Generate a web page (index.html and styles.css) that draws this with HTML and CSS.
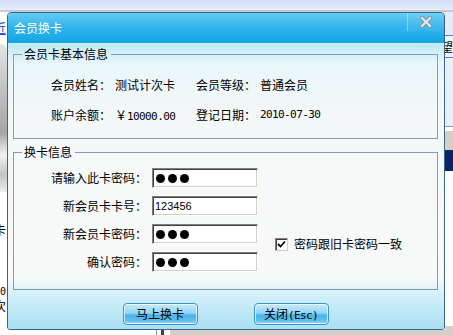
FILE: index.html
```html
<!DOCTYPE html>
<html lang="zh-CN">
  <head>
    <meta charset="UTF-8" />
    <title>会员换卡</title>
    <link rel="stylesheet" href="styles.css">
  </head>
  <body>
    <div class="screen">
      <div class="topbar"></div>
      <div class="desk">
        <div class="side-left">
          <div class="frag link">近</div>
          <div class="logo"></div>
          <div class="frag frag-ka">卡</div>
          <div class="frag frag-num">00</div>
          <div class="frag frag-ci">次</div>
        </div>

        <div class="middle">
          <div class="dialog">
            <div class="titlebar">
              <span class="title">会员换卡</span>
              <span class="close">
                <svg width="12" height="12" viewBox="0 0 12 12">
                  <path d="M2 2 L10 10 M10 2 L2 10" stroke="#7890a4" stroke-width="4.2" stroke-linecap="square" fill="none"/>
                  <path d="M2 2 L10 10 M10 2 L2 10" stroke="#e4e9ee" stroke-width="2.2" stroke-linecap="square" fill="none"/>
                </svg>
              </span>
            </div>

            <div class="body">
              <fieldset class="group">
                <legend>会员卡基本信息</legend>
                <div class="info-grid">
                  <span>会员姓名：</span>
                  <span>测试计次卡</span>
                  <span>会员等级：</span>
                  <span>普通会员</span>
                  <span>账户余额：</span>
                  <span>￥<span class="num">10000.00</span></span>
                  <span>登记日期：</span>
                  <span class="num">2010-07-30</span>
                </div>
              </fieldset>

              <fieldset class="group change">
                <legend>换卡信息</legend>
                <div class="form-grid">
                  <label>请输入此卡密码：</label>
                  <div class="field"><i class="dot"></i><i class="dot"></i><i class="dot"></i></div>

                  <label>新会员卡卡号：</label>
                  <div class="field field-text">123456</div>

                  <label>新会员卡密码：</label>
                  <div class="field"><i class="dot"></i><i class="dot"></i><i class="dot"></i></div>

                  <label>确认密码：</label>
                  <div class="field"><i class="dot"></i><i class="dot"></i><i class="dot"></i></div>

                  <div class="check">
                    <span class="box">
                      <svg width="9" height="9" viewBox="0 0 9 9">
                        <path d="M1 4 L3.5 6.5 L8 1.5" stroke="#000" stroke-width="1.8" fill="none"/>
                      </svg>
                    </span>
                    <span>密码跟旧卡密码一致</span>
                  </div>
                </div>
              </fieldset>

              <div class="buttons">
                <button class="btn">马上换卡</button>
                <button class="btn">关闭<span class="num">(Esc)</span></button>
              </div>
            </div>
          </div>
          <div class="under">
            <span class="under-white"></span>
            <span class="under-mark"></span>
            <span class="under-grey"></span>
          </div>
        </div>

        <div class="side-right">
          <div class="r-pale"></div>
          <div class="r-menu">望</div>
          <div class="r-light"></div>
          <div class="r-grey"></div>
          <div class="r-navy"></div>
          <div class="r-white"></div>
          <div class="r-bottom"></div>
        </div>
      </div>
    </div>
  </body>
</html>
```

FILE: styles.css
```css
* {
  box-sizing: border-box;
}
body {
  margin: 0;
}
.screen {
  width: 453px;
  height: 335px;
  overflow: hidden;
  background: #fff;
  font-family: "Noto Sans CJK SC", sans-serif;
  font-size: 12px;
  color: #000;
}
.topbar {
  height: 12px;
  background: linear-gradient(#d2def5, #e6edfb);
  border-bottom: 2px solid #c4cad2;
}
.desk {
  display: flex;
  height: 323px;
}

/* clipped bits of the main window behind the dialog */
.side-left {
  width: 7px;
  overflow: hidden;
  background: #fff;
}
.frag {
  margin-left: -6px;
  line-height: 12px;
  white-space: nowrap;
}
.link {
  margin-top: 10px;
  color: #1a3cc8;
  text-decoration: underline;
}
.logo {
  margin-top: 10px;
  height: 148px;
  background: linear-gradient(#e4e4e4, #b8b8b8 40%, #a6a6a6 60%, #f2f2f2 75%, #c4c4c4 88%, #ececec);
  border-top-right-radius: 6px;
}
.frag-ka {
  margin-top: 32px;
}
.frag-num {
  margin-top: 50px;
  font-family: "DejaVu Sans Mono", monospace;
  font-size: 10px;
}
.frag-ci {
  margin-top: 2px;
}

.middle {
  width: 438px;
  display: flex;
  flex-direction: column;
}
.dialog {
  height: 318px;
  border: 1px solid #3a6686;
  border-radius: 4px 4px 3px 3px;
  display: flex;
  flex-direction: column;
  overflow: hidden;
}
.titlebar {
  height: 30px;
  flex: none;
  display: flex;
  justify-content: space-between;
  background: linear-gradient(#66ccf3, #34b5ec 45%, #12a5e4);
}
.title {
  color: #fff;
  padding: 8px 0 0 6px;
  line-height: 14px;
}
.close {
  width: 36px;
  height: 18px;
  margin-right: 1px;
  border-left: 1px solid rgba(255, 255, 255, 0.35);
  background: rgba(255, 255, 255, 0.06);
  display: flex;
  align-items: center;
  justify-content: center;
}
.body {
  flex: 1;
  border-top: 1px solid #d6f3fc;
  padding: 3px 6px 0 5px;
  background: linear-gradient(#bfe9f8, #e9f7fa 7%, #f4f8f8 25%, #f8faf9 82%, #d4f0f9 88%, #a9dff4);
}
.group {
  margin: 0;
  min-width: 0;
  border: 1px solid #7f9db9;
  padding: 8px 8px 9px;
}
.group legend {
  padding: 0 3px 0 2px;
  line-height: 14px;
}
.info-grid {
  display: grid;
  grid-template-columns: 64px 81px 64px auto;
  grid-auto-rows: 30px;
  align-items: center;
  margin-left: 29px;
}
.num {
  font-family: "DejaVu Sans Mono", monospace;
  font-size: 11px;
  letter-spacing: -0.6px;
}

.change {
  margin-top: 6px;
  padding-top: 9px;
  padding-bottom: 17px;
}
.form-grid {
  display: grid;
  grid-template-columns: 125px 106px auto;
  grid-auto-rows: 20px;
  column-gap: 5px;
  row-gap: 8px;
}
.form-grid label {
  grid-column: 1;
  text-align: right;
  line-height: 20px;
}
.field {
  grid-column: 2;
  display: flex;
  align-items: center;
  gap: 3px;
  padding-left: 3px;
  background: #fff;
  border: 1px solid;
  border-color: #808080 #fff #fff #808080;
  box-shadow: inset 1px 1px #404040, inset -1px -1px #d4d0c8;
}
.dot {
  width: 9px;
  height: 9px;
  border-radius: 50%;
  background: #000;
}
.field-text {
  padding-left: 2px;
  font-family: "Liberation Sans", sans-serif;
  font-size: 11px;
}
.check {
  grid-column: 3;
  grid-row: 3 / span 2;
  align-self: start;
  margin: 13px 0 0 12px;
  display: flex;
  align-items: center;
  gap: 6px;
  line-height: 14px;
}
.box {
  width: 13px;
  height: 13px;
  background: #fff;
  border: 1px solid;
  border-color: #808080 #d4d0c8 #d4d0c8 #808080;
  box-shadow: inset 1px 1px #404040;
  display: flex;
  align-items: center;
  justify-content: center;
}

.buttons {
  display: flex;
  justify-content: center;
  gap: 56px;
  margin-top: 13px;
}
.btn {
  width: 75px;
  height: 22px;
  padding: 0;
  border: 1px solid #3f93cf;
  border-radius: 4px;
  box-shadow: inset 0 0 0 1px rgba(255, 255, 255, 0.7);
  background: linear-gradient(#c4ebfc, #92d5f6 45%, #4ab3ea 56%, #5fbff0 84%, #a6e0f8);
  font: inherit;
  color: #000;
  line-height: 20px;
}

.under {
  flex: 1;
  display: flex;
}
.under-white {
  width: 145px;
  background: #fff;
}
.under-mark {
  width: 18px;
  background: linear-gradient(90deg, #fff 4px, #7f9db9 4px 5px, #fff 5px 9px, #404040 9px 12px, #fff 12px);
}
.under-grey {
  flex: 1;
  background: #d4d0c8;
}

.side-right {
  width: 8px;
  display: flex;
  flex-direction: column;
  overflow: hidden;
}
.r-pale {
  height: 23px;
  background: #e4ecfc;
}
.r-menu {
  height: 23px;
  border-top: 1px solid #4a84d0;
  border-bottom: 1px solid #4a84d0;
  background: #eef4fc;
  line-height: 21px;
  white-space: nowrap;
  text-indent: -4px;
}
.r-light {
  height: 69px;
  background: #e8f0fc;
  border-bottom: 1px solid #9a9a9a;
}
.r-grey {
  height: 23px;
  background: #d4d0c8;
  border-top: 4px solid #fff;
}
.r-navy {
  height: 21px;
  background: #0a246a;
}
.r-white {
  height: 155px;
  background: #fff;
}
.r-bottom {
  flex: 1;
  background: #d4d0c8;
}
```
